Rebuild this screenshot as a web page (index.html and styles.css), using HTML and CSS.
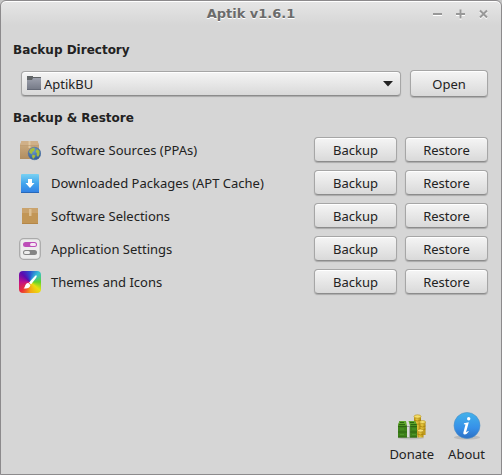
FILE: index.html
```html
<!DOCTYPE html>
<html lang="en">
<head>
<meta charset="utf-8">
<title>Aptik v1.6.1</title>
<link rel="stylesheet" href="styles.css">
</head>
<body>
<div class="window">
  <header class="titlebar">
    <h1>Aptik v1.6.1</h1>
    <div class="window-controls">
      <button type="button" aria-label="Minimize"><svg viewBox="0 0 11 11"><path d="M1 5h9"/></svg></button>
      <button type="button" aria-label="Maximize"><svg viewBox="0 0 11 11"><path d="M1 5h9M5.500 .5v9"/></svg></button>
      <button type="button" aria-label="Close"><svg viewBox="0 0 11 11"><path d="M2 1.500l7 7M9 1.500l-7 7"/></svg></button>
    </div>
  </header>
  <main class="content">
    <h2><label for="directory">Backup Directory</label></h2>
    <div class="directory">
      <div class="chooser">
        <select id="directory"><option>AptikBU</option></select>
        <svg class="folder" viewBox="0 0 16 16"><defs><linearGradient id="fold" x2="0" y2="1"><stop stop-color="#9da1ad"/><stop offset="1" stop-color="#737885"/></linearGradient></defs><path d="M1 1h6v1h8v9H1z" fill="#616567"/><path d="M1 5h5l1-2h8v12H1z" fill="url(#fold)"/><path d="M1 14.500h14" stroke="#646976"/></svg>
        <svg class="arrow" viewBox="0 0 10 6"><path d="M0 0h10L5 5.500z" fill="#222"/></svg>
      </div>
      <button type="button" class="button open">Open</button>
    </div>
    <h2>Backup &amp; Restore</h2>
    <ul class="tasks">
      <li>
        <svg class="icon" viewBox="0 0 22 22"><defs><linearGradient id="box1" x2="0" y2="1"><stop stop-color="#cfae83"/><stop offset="1" stop-color="#b08d60"/></linearGradient><radialGradient id="globe" cx=".4" cy=".25" r=".8"><stop stop-color="#6f9ed2"/><stop offset="1" stop-color="#2a5595"/></radialGradient></defs><path d="M2.500 2h16l1.500 4v14H1V6z" fill="url(#box1)"/><path d="M2.500 2h16L20 6.500H1z" fill="#d0b088"/><path d="M9.500 2h2v7h-2z" fill="#dfc7a1"/><path d="M1 6.500h19" stroke="#bb986b" opacity=".6"/><circle cx="15.500" cy="14.500" r="6.300" fill="url(#globe)" stroke="#416a9e" stroke-width=".5"/><path d="M10 13l1.500-3 3-1.200 1.500 1-1 2.200-1.500 1-.5 2-1.500-.5zM13.500 15.500l3 1-1 2-1.500 1.500-1-2.500zM18 10l2.500 2v3.500L19 18l-1.500-2 .5-1.500-1.500-2z" fill="#a5bd3d"/></svg>
        <span>Software Sources (PPAs)</span><button type="button" class="button">Backup</button><button type="button" class="button">Restore</button>
      </li>
      <li>
        <svg class="icon" viewBox="0 0 22 22"><defs><linearGradient id="blue" x2="0" y2="1"><stop stop-color="#79d1f2"/><stop offset=".5" stop-color="#43a5ed"/><stop offset="1" stop-color="#317fe4"/></linearGradient></defs><rect x="2" y="2" width="18" height="19" rx="1" fill="url(#blue)"/><path d="M2 20.500h18" stroke="#2868b9"/><path d="M9 7h4v4h2.500L11 16l-4.500-5H9z" fill="#fff"/></svg>
        <span>Downloaded Packages (APT Cache)</span><button type="button" class="button">Backup</button><button type="button" class="button">Restore</button>
      </li>
      <li>
        <svg class="icon" viewBox="0 0 22 22"><path d="M3 3h16v16H3z" fill="#c29656"/><path d="M3 3h16v5H3z" fill="#caa36d"/><path d="M3 18.500h16" stroke="#b48748"/><path d="M10 4h2.500v7H10z" fill="#dcbf92"/></svg>
        <span>Software Selections</span><button type="button" class="button">Backup</button><button type="button" class="button">Restore</button>
      </li>
      <li>
        <svg class="icon" viewBox="0 0 22 22"><rect x=".7" y=".7" width="20.600" height="20.600" rx="4" fill="#ededed" stroke="#aaa" stroke-width="1.300"/><rect x="4" y="4" width="14" height="5" rx="2.500" fill="#bd4eb8"/><rect x="11" y="5" width="6" height="3" rx="1.500" fill="#f5e7f4"/><rect x="4" y="12" width="14" height="5" rx="2.500" fill="#858585"/><rect x="5" y="13" width="6" height="3" rx="1.500" fill="#eee"/></svg>
        <span>Application Settings</span><button type="button" class="button">Backup</button><button type="button" class="button">Restore</button>
      </li>
      <li>
        <span class="icon palette"><svg viewBox="0 0 22 22"><path d="M17.500 4.500q.7.700-.5 2.500l-5 6.500-2-2L16 5q1-1 1.500-.5z" fill="#fff"/><path d="M9.300 11.700l2 2.300c0 3-3.300 3.500-6.800 3.500 2-1 1-5 4.800-5.800z" fill="#fff"/></svg></span>
        <span>Themes and Icons</span><button type="button" class="button">Backup</button><button type="button" class="button">Restore</button>
      </li>
    </ul>
  </main>
  <footer class="toolbar">
    <button type="button">
      <svg viewBox="0 0 32 28"><defs><linearGradient id="coin"><stop stop-color="#b68c13"/><stop offset=".4" stop-color="#e8c93f"/><stop offset="1" stop-color="#b0890f"/></linearGradient></defs><ellipse cx="15" cy="26" rx="13" ry="1.500" fill="#000" opacity=".12"/><path d="M18 4.500v19h7v-19z" fill="url(#coin)"/><ellipse cx="21.500" cy="4.500" rx="3.500" ry="1.700" fill="#f5df6b" stroke="#b18b18" stroke-width=".6"/><path d="M23.500 10v13h6V10z" fill="url(#coin)"/><ellipse cx="26.500" cy="10" rx="3" ry="1.500" fill="#f5df6b" stroke="#b18b18" stroke-width=".6"/><path d="M18 8q3 2 7 0M18 11q3 2 5.500 1M23.500 14q3 2 6 0M23.500 17q3 2 6 0" fill="none" stroke="#a47b0b" stroke-width=".7"/><path d="M3.500 9H19l2 4v12.500H2V13z" fill="#3d8119"/><path d="M3.500 9H19l2 4.500H2z" fill="#5ea52b"/><path d="M3 12.500h6M14.500 12.500h6M4 10.500h4M14 10.500h4" stroke="#2c6611"/><path d="M2 14.500h9M14 14.500h7M2 20h19M2 25h19" stroke="#285d10" stroke-width=".8"/><path d="M4 17h4M16 17h4M4 22.500h4M16 22.500h4" stroke="#4e952a"/><path d="M10 9h2.500l1.500 5v11.500h-3V14z" fill="#d9dad7"/><path d="M10.800 14.500h3.400M13.600 15v10" stroke="#8d908b" stroke-width=".8"/><path d="M21.500 18.500v7h6v-7z" fill="url(#coin)"/><ellipse cx="24.500" cy="18.500" rx="3" ry="1.500" fill="#f7e075" stroke="#a98315" stroke-width=".6"/><path d="M21.500 22q3 2 6 0" fill="none" stroke="#a47b0b" stroke-width=".8"/></svg>
      <span>Donate</span>
    </button>
    <button type="button">
      <svg viewBox="0 0 32 28"><defs><linearGradient id="info" x2="0" y2="1"><stop stop-color="#43b2ea"/><stop offset=".6" stop-color="#3690e8"/><stop offset="1" stop-color="#2c6fc4"/></linearGradient></defs><ellipse cx="16" cy="25.500" rx="13" ry="2" fill="#000" opacity=".12"/><circle cx="16" cy="13.500" r="13" fill="url(#info)" stroke="#4b8fc6" stroke-width=".6"/><circle cx="17.700" cy="6.700" r="1.700" fill="#fff"/><path d="M13 11.200l4.800-1-2.600 9.500q-.2 1.200 2-.7l.6.600q-2 2.900-4 2.900-2 0-1.300-2.500l2-7.600-1.700-.2z" fill="#fff"/></svg>
      <span>About</span>
    </button>
  </footer>
</div>
</body>
</html>
```
FILE: styles.css
```css
* { box-sizing: border-box; }

body {
  margin: 0;
  background: #c5c5c5;
  color: #222;
  font: 13px/18px "Noto Sans", sans-serif;
}

button, select { font: inherit; color: inherit; }

.window {
  display: flex;
  flex-direction: column;
  min-height: 100vh;
  border: 1px solid #8c8a8c;
  border-radius: 6px 6px 0 0;
  background: linear-gradient(#e6e6e6, #d6d6d6 24px);
  box-shadow: inset 0 1px #fff;
}

.titlebar {
  display: grid;
  grid-template-columns: 1fr auto 1fr;
  align-items: center;
  height: 26px;
  padding: 0 12px;
}

.titlebar h1 {
  grid-column: 2;
  margin: 0;
  color: #6b6b6b;
  font: bold 13px/18px "DejaVu Sans", sans-serif;
  text-shadow: 0 1px #fff;
}

.window-controls {
  display: flex;
  justify-content: flex-end;
  gap: 12px;
}

.window-controls button {
  width: 11px;
  height: 11px;
  padding: 0;
  border: 0;
  background: none;
}

.window-controls svg {
  display: block;
  fill: none;
  stroke: #989898;
  stroke-width: 2;
  filter: drop-shadow(0 1px #fff);
}

.content {
  flex: 1;
  padding: 14px 13px 0 12px;
}

h2 {
  margin: 0 0 10px;
  font: bold 12px/18px "DejaVu Sans", sans-serif;
}

.directory {
  display: flex;
  align-items: center;
  gap: 9px;
  margin-left: 8px;
  padding: 1px 0 12px;
}

.chooser {
  position: relative;
  flex: 1;
}

.chooser select {
  display: block;
  width: 100%;
  height: 25px;
  padding: 0 28px 0 22px;
  appearance: none;
}

.folder, .arrow {
  position: absolute;
  pointer-events: none;
}

.folder {
  left: 5px;
  top: 4px;
  width: 16px;
}

.arrow {
  right: 8px;
  top: 10px;
  width: 10px;
}

.button, .chooser select {
  border: 1px solid #a6a6a6;
  border-bottom-color: #8c8c8c;
  border-radius: 4px;
  background: linear-gradient(#f5f5f5, #d9d9d9);
  box-shadow: inset 0 1px #fff, 0 1px 1px #aaa;
}

.button {
  width: 83px;
  height: 25px;
  padding: 0;
}

.open {
  width: 78px;
  height: 27px;
}

.tasks {
  display: grid;
  gap: 8px;
  margin: 0;
  padding: 0 0 0 6px;
  list-style: none;
}

.tasks li {
  display: grid;
  grid-template-columns: 22px 1fr auto auto;
  align-items: center;
  column-gap: 8px;
}

.tasks li > span:not(.icon) { padding-left: 2px; }

.icon {
  display: block;
  width: 22px;
  height: 22px;
}

.palette {
  border-radius: 4px;
  background: conic-gradient(#2a4fd0, #35bfd6 12%, #5fd32c 25%, #e8e010 36%, #f5a713 49%, #ea2f38 62%, #c0108a 75%, #5a0ab0 88%, #2a4fd0);
}

.toolbar {
  display: flex;
  justify-content: flex-end;
  gap: 14px;
  padding: 0 16px 11px;
}

.toolbar button {
  display: flex;
  flex-direction: column;
  align-items: center;
  gap: 5px;
  padding: 0;
  border: 0;
  background: none;
}

.toolbar svg {
  width: 32px;
  height: 28px;
}
```
